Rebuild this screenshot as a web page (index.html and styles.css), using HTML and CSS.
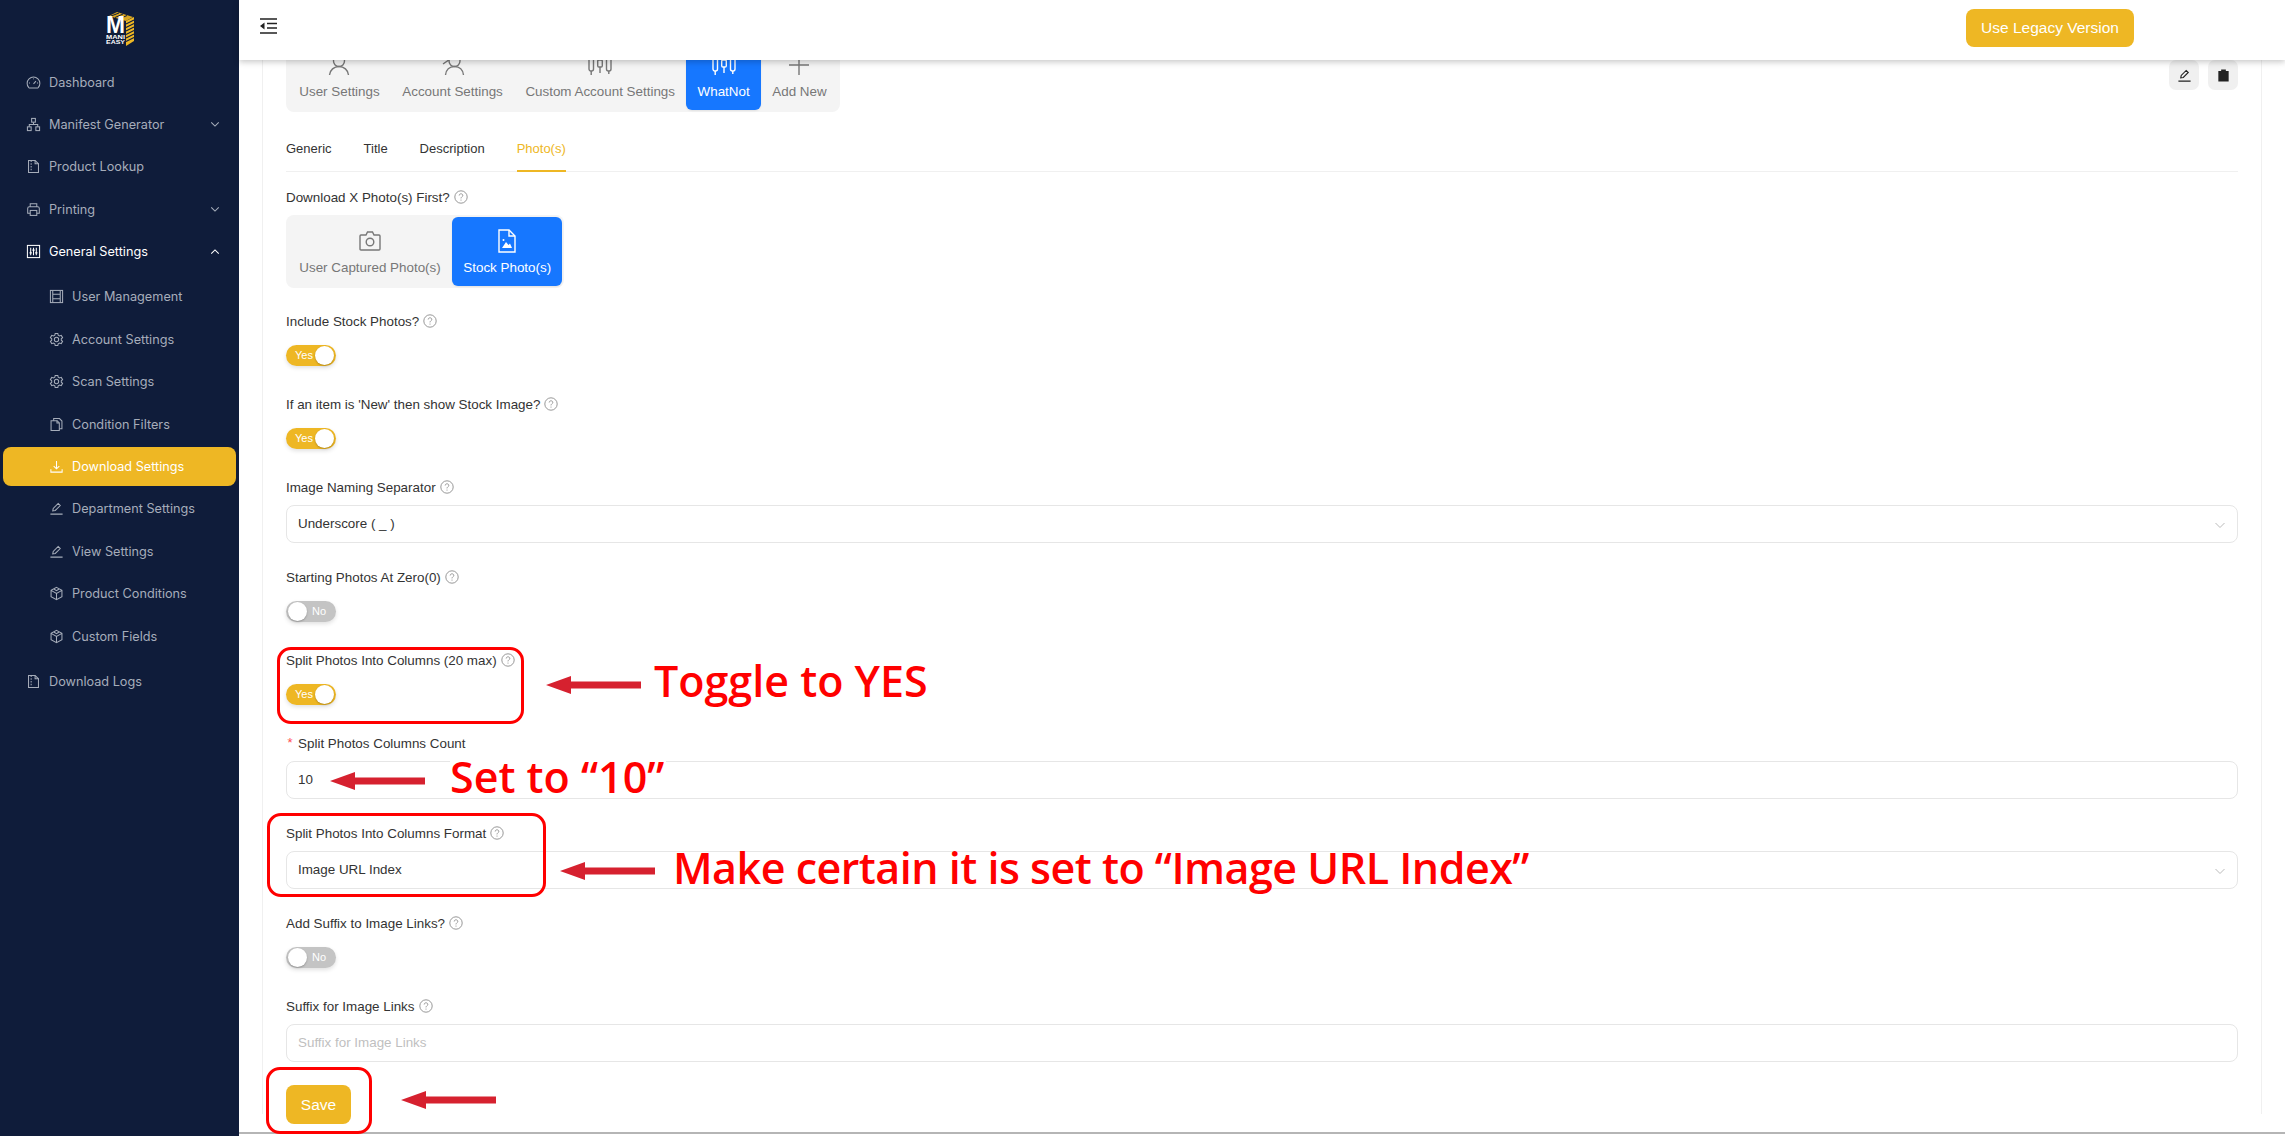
FILE: index.html
```html
<!DOCTYPE html>
<html lang="en">
<head>
    <meta charset="UTF-8">
    <title>Download Settings</title>
    <link rel="stylesheet" href="styles.css">
</head>
<body>

<svg class="sprite" xmlns="http://www.w3.org/2000/svg">
    <symbol id="i-gauge" viewBox="0 0 16 16"><path d="M3 13.500a6.800 6.800 0 1 1 10 0c-.3.3-.6.4-1 .4H4c-.4 0-.7-.1-1-.4z"/><path d="M8 9.500l2.600-3M3.200 8.500h1M11.800 8.500h1M8 3.600v1"/></symbol>
    <symbol id="i-tree" viewBox="0 0 16 16"><rect x="6" y="1.500" width="4" height="4"/><rect x="1.500" y="10.500" width="4" height="4"/><rect x="10.500" y="10.500" width="4" height="4"/><path d="M8 5.500V8M3.500 10.500V8h9v2.500"/></symbol>
    <symbol id="i-file" viewBox="0 0 16 16"><path d="M2.700 1.500h7l3.600 3.600v9.400H2.700z"/><path d="M9.700 1.500v3.600h3.600M5.500 1.500v1.600M5.500 4.500v1.600M5.500 7.500v1.600M5.500 10.500v1.600"/></symbol>
    <symbol id="i-print" viewBox="0 0 16 16"><path d="M4.500 5V1.800h7V5M4.500 12H1.800V6.800c0-1 .8-1.800 1.800-1.800h8.800c1 0 1.800.8 1.800 1.800V12h-2.700"/><rect x="4.500" y="9" width="7" height="5.300"/></symbol>
    <symbol id="i-box" viewBox="0 0 16 16"><rect x="1.500" y="1.500" width="13" height="13"/><path d="M4 1.500v13M12 1.500v13M4 5.500h8M4 10.500h8"/></symbol>
    <symbol id="i-gear" viewBox="0 0 16 16"><path d="M6.600 1.600h2.800l.4 1.800 1.500.8 1.800-.6 1.400 2.400-1.400 1.200v1.600l1.400 1.200-1.400 2.400-1.800-.6-1.500.8-.4 1.800H6.600l-.4-1.800-1.500-.8-1.800.6-1.400-2.400 1.400-1.200V7.200L1.500 6l1.400-2.400 1.800.6 1.500-.8z"/><circle cx="8" cy="8" r="2.300"/></symbol>
    <symbol id="i-copy" viewBox="0 0 16 16"><path d="M5 4V1.700h6.200l2.600 2.600v8.200H11"/><path d="M2.200 4h6.500L11 6.300v8.200H2.200z"/><path d="M8.500 4v2.500H11"/></symbol>
    <symbol id="i-down" viewBox="0 0 16 16"><path d="M8 2v8M5 7.500L8 10.400l3-2.900M2 11v3h12v-3"/></symbol>
    <symbol id="i-pen" viewBox="0 0 16 16"><path d="M4 10.500l.5-2.600 5.300-5.300 2.200 2.200-5.300 5.300zM1.500 14h13"/></symbol>
    <symbol id="i-cube" viewBox="0 0 16 16"><path d="M8 1.500l5.800 3.200v6.600L8 14.500l-5.800-3.200V4.700zM2.200 4.700L8 8l5.800-3.300M8 8v6.500M5.200 3.200L8 5l2.800-1.800"/></symbol>
    <symbol id="i-user" viewBox="0 0 24 24"><circle cx="12" cy="8" r="5.500"/><path d="M2.500 22c.5-5 4.500-8.500 9.500-8.500s9 3.500 9.500 8.500"/></symbol>
    <symbol id="i-users" viewBox="0 0 24 24"><circle cx="13.500" cy="8" r="5.500"/><path d="M4.500 22c.5-5 4-8.500 9-8.500s8.500 3.500 9 8.500M5 2l3.500 4.500L2 11"/></symbol>
    <symbol id="i-sliders" viewBox="0 0 24 24"><rect x="1" y="0" width="4.500" height="18" rx="2"/><rect x="18.500" y="0" width="4.500" height="18" rx="2"/><rect x="9.700" y="7" width="4.600" height="7" rx="1.200"/><path d="M3.200 18v4M12 0v7M12 14v6M20.800 18v3"/></symbol>
    <symbol id="i-help" viewBox="0 0 14 14"><circle cx="7" cy="7" r="6.200"/><path d="M5.200 5.500c0-1 .8-1.700 1.800-1.700s1.800.7 1.800 1.600c0 1.400-1.800 1.400-1.800 3M7 9.600v1"/></symbol>
    <symbol id="i-chev" viewBox="0 0 12 12"><path d="M1.500 4l4.500 4.500L10.500 4"/></symbol>
</svg>

<div class="app">

    <aside class="sidebar">
        <div class="logo">
            <svg width="30" height="35" viewBox="0 0 30 35">
                <path d="M4 4l8-4 16 5-7 4z" fill="#d8a520"/>
                <path d="M6 4l8-3M10 5.500l8-3.500M14 7l8-3.500" stroke="#0f1c3a" stroke-width="1"/>
                <path d="M21 9l8-4v24l-8 5z" fill="#eeb724"/>
                <path d="M21 12l8-4M21 15.500l8-4M21 19l8-4M21 22.500l8-4M21 26l8-4M21 29.500l8-4" stroke="#0f1c3a" stroke-width="1.100"/>
                <text x="1" y="21" class="logo-m" textLength="19" lengthAdjust="spacingAndGlyphs">M</text>
                <text x="1" y="26.500" class="logo-sm" textLength="19" lengthAdjust="spacingAndGlyphs">MANI</text>
                <text x="1" y="31.500" class="logo-sm" textLength="19" lengthAdjust="spacingAndGlyphs">EASY</text>
            </svg>
        </div>
        <nav class="menu">
            <a class="menu-item"><svg class="ico"><use href="#i-gauge"/></svg>Dashboard</a>
            <a class="menu-item"><svg class="ico"><use href="#i-tree"/></svg>Manifest Generator<svg class="chev"><use href="#i-chev"/></svg></a>
            <a class="menu-item"><svg class="ico"><use href="#i-file"/></svg>Product Lookup</a>
            <a class="menu-item"><svg class="ico"><use href="#i-print"/></svg>Printing<svg class="chev"><use href="#i-chev"/></svg></a>
            <a class="menu-item open">
                <svg class="ico" viewBox="0 0 16 16"><rect x="1.500" y="1.500" width="13" height="13"/><path d="M5 4v8M8 4v8M11 4v8"/><path d="M3.800 9.500h2.400M6.800 6.500h2.400M9.800 9.500h2.400" stroke-width="1.500"/></svg>
                General Settings<svg class="chev up"><use href="#i-chev"/></svg>
            </a>
            <div class="submenu">
                <a class="menu-item sub"><svg class="ico"><use href="#i-box"/></svg>User Management</a>
                <a class="menu-item sub"><svg class="ico"><use href="#i-gear"/></svg>Account Settings</a>
                <a class="menu-item sub"><svg class="ico"><use href="#i-gear"/></svg>Scan Settings</a>
                <a class="menu-item sub"><svg class="ico"><use href="#i-copy"/></svg>Condition Filters</a>
                <a class="menu-item sub active"><svg class="ico"><use href="#i-down"/></svg>Download Settings</a>
                <a class="menu-item sub"><svg class="ico"><use href="#i-pen"/></svg>Department Settings</a>
                <a class="menu-item sub"><svg class="ico"><use href="#i-pen"/></svg>View Settings</a>
                <a class="menu-item sub"><svg class="ico"><use href="#i-cube"/></svg>Product Conditions</a>
                <a class="menu-item sub"><svg class="ico"><use href="#i-cube"/></svg>Custom Fields</a>
            </div>
            <a class="menu-item logs"><svg class="ico"><use href="#i-file"/></svg>Download Logs</a>
        </nav>
    </aside>

    <div class="main">
        <header class="topbar">
            <svg class="fold" viewBox="0 0 17 16"><path d="M0 1h17M7 5.500h10M7 10h10M0 15h17"/><path class="fill" d="M4.500 4.500v7L0 8z"/></svg>
            <button class="legacy-btn">Use Legacy Version</button>
        </header>

        <div class="content">
            <div class="card">
                <div class="tab-row">
                    <div class="segmented">
                        <div class="seg-item"><svg class="seg-ico"><use href="#i-user"/></svg>User Settings</div>
                        <div class="seg-item"><svg class="seg-ico"><use href="#i-users"/></svg>Account Settings</div>
                        <div class="seg-item"><svg class="seg-ico"><use href="#i-sliders"/></svg>Custom Account Settings</div>
                        <div class="seg-item selected"><svg class="seg-ico"><use href="#i-sliders"/></svg>WhatNot</div>
                        <div class="seg-item"><svg class="seg-ico" viewBox="0 0 24 24"><path d="M12 2v20M2 12h20"/></svg>Add New</div>
                    </div>
                    <div class="row-actions">
                        <button class="icon-btn"><svg class="act-ico" viewBox="0 0 16 16"><path d="M4 10.500l.5-2.600 5.300-5.300 2.200 2.200-5.300 5.300zM1.500 14h13"/></svg></button>
                        <button class="icon-btn"><svg class="act-ico" viewBox="0 0 16 16"><path class="fill" d="M5.500 1.500h5v1.800h3v11.200h-11V3.300h3z"/></svg></button>
                    </div>
                </div>

                <div class="sub-tabs">
                    <span class="sub-tab">Generic</span>
                    <span class="sub-tab">Title</span>
                    <span class="sub-tab">Description</span>
                    <span class="sub-tab current">Photo(s)</span>
                </div>

                <div class="field seg-field">
                    <label>Download X Photo(s) First? <svg class="help"><use href="#i-help"/></svg></label>
                    <div class="segmented photos">
                        <div class="seg-item">
                            <svg class="seg-ico" viewBox="0 0 24 24"><path d="M3 6h5l1.500-3h5L16 6h5c.6 0 1 .4 1 1v13c0 .6-.4 1-1 1H3c-.6 0-1-.4-1-1V7c0-.6.4-1 1-1z"/><circle cx="12" cy="13" r="3.800"/></svg>
                            User Captured Photo(s)
                        </div>
                        <div class="seg-item selected">
                            <svg class="seg-ico" viewBox="0 0 24 24"><path d="M4 1h10l6 6v16H4z"/><path d="M14 1v6h6"/><path class="fill-w" d="M7 19l4-6 2.500 3 1.500-1.500 2 4.500z"/><circle class="fill-w" cx="8.500" cy="11" r="1"/></svg>
                            Stock Photo(s)
                        </div>
                    </div>
                </div>

                <div class="field">
                    <label>Include Stock Photos? <svg class="help"><use href="#i-help"/></svg></label>
                    <div class="switch-wrap"><span class="switch on"><span class="switch-text">Yes</span><span class="knob"></span></span></div>
                </div>

                <div class="field">
                    <label>If an item is 'New' then show Stock Image? <svg class="help"><use href="#i-help"/></svg></label>
                    <div class="switch-wrap"><span class="switch on"><span class="switch-text">Yes</span><span class="knob"></span></span></div>
                </div>

                <div class="field">
                    <label>Image Naming Separator <svg class="help"><use href="#i-help"/></svg></label>
                    <div class="select">Underscore ( _ )<svg class="select-arrow"><use href="#i-chev"/></svg></div>
                </div>

                <div class="field">
                    <label>Starting Photos At Zero(0) <svg class="help"><use href="#i-help"/></svg></label>
                    <div class="switch-wrap"><span class="switch"><span class="knob"></span><span class="switch-text">No</span></span></div>
                </div>

                <div class="field">
                    <label>Split Photos Into Columns (20 max) <svg class="help"><use href="#i-help"/></svg></label>
                    <div class="switch-wrap"><span class="switch on"><span class="switch-text">Yes</span><span class="knob"></span></span></div>
                </div>

                <div class="field">
                    <label><span class="required">*</span> Split Photos Columns Count</label>
                    <div class="select">10</div>
                </div>

                <div class="field">
                    <label>Split Photos Into Columns Format <svg class="help"><use href="#i-help"/></svg></label>
                    <div class="select">Image URL Index<svg class="select-arrow"><use href="#i-chev"/></svg></div>
                </div>

                <div class="field">
                    <label>Add Suffix to Image Links? <svg class="help"><use href="#i-help"/></svg></label>
                    <div class="switch-wrap"><span class="switch"><span class="knob"></span><span class="switch-text">No</span></span></div>
                </div>

                <div class="field">
                    <label>Suffix for Image Links <svg class="help"><use href="#i-help"/></svg></label>
                    <div class="select placeholder">Suffix for Image Links</div>
                </div>

                <button class="save-btn">Save</button>
            </div>
        </div>
    </div>

    <!-- red notes drawn on top of the screenshot -->
    <div class="note-box box-toggle"></div>
    <div class="note-box box-format"></div>
    <div class="note-box box-save"></div>

    <svg class="note-arrow arrow-toggle" viewBox="0 0 95 18"><path d="M0 9L25 0v5.500h70v7H25V18z"/></svg>
    <svg class="note-arrow arrow-count" viewBox="0 0 95 18"><path d="M0 9L25 0v5.500h70v7H25V18z"/></svg>
    <svg class="note-arrow arrow-format" viewBox="0 0 95 18"><path d="M0 9L25 0v5.500h70v7H25V18z"/></svg>
    <svg class="note-arrow arrow-save" viewBox="0 0 95 18"><path d="M0 9L25 0v5.500h70v7H25V18z"/></svg>

    <div class="note-text text-toggle">Toggle to YES</div>
    <div class="note-text text-count">Set to “10”</div>
    <div class="note-text text-format">Make certain it is set to “Image URL Index”</div>

</div>

</body>
</html>
```

FILE: styles.css
```css
* {
    box-sizing: border-box;
}
html, body {
    margin: 0;
    padding: 0;
    height: 100%;
    overflow: hidden;
}
body {
    font-family: "Liberation Sans", Arial, sans-serif;
    font-size: 13.400px;
    color: #333;
    background: #fff;
}
.sprite {
    display: none;
}
.app {
    position: relative;
    display: flex;
    width: 2285px;
    height: 1136px;
    overflow: hidden;
}

/* sidebar */
.sidebar {
    width: 239px;
    flex: none;
    background: #0f1c3a;
    color: #a6adba;
    font-family: Inter, "Liberation Sans", sans-serif;
    font-size: 12.700px;
}
.logo {
    height: 62.500px;
    padding-top: 12px;
    text-align: center;
}
.logo svg {
    display: block;
    margin: 0 auto;
}
.logo-m {
    font: bold 24px "Liberation Sans", sans-serif;
    fill: #fff;
}
.logo-sm {
    font: bold 5px "Liberation Sans", sans-serif;
    fill: #fff;
}
.menu {
    display: flex;
    flex-direction: column;
}
.menu-item {
    display: flex;
    align-items: center;
    height: 39px;
    margin: 0 3px 3.400px;
    padding-left: 23px;
    border-radius: 8px;
}
.menu-item .ico {
    width: 15px;
    height: 15px;
    margin-right: 8px;
    fill: none;
    stroke: currentColor;
    stroke-width: 1.100;
    flex: none;
}
.menu-item.open {
    color: #fff;
}
.menu-item .chev {
    width: 10px;
    height: 10px;
    margin-left: auto;
    margin-right: 16px;
    fill: none;
    stroke: currentColor;
    stroke-width: 1.300;
}
.chev.up {
    transform: rotate(180deg);
}
.submenu {
    display: flex;
    flex-direction: column;
    padding-top: 3px;
}
.menu-item.sub {
    padding-left: 46px;
}
.menu-item.active {
    background: #eeb724;
    color: #fff;
}
.menu-item.logs {
    margin-top: 3px;
}

/* top bar */
.main {
    flex: 1;
    min-width: 0;
    display: flex;
    flex-direction: column;
    border-bottom: 2px solid #b5b5b5;
    height: 1134px;
}
.topbar {
    position: relative;
    z-index: 2;
    flex: none;
    height: 60px;
    display: flex;
    align-items: center;
    justify-content: space-between;
    padding: 0 151px 0 21px;
    background: #fff;
    box-shadow: 0 2px 6px rgba(0, 0, 0, .22);
}
.fold {
    width: 17px;
    height: 16px;
    margin-top: -8px;
    fill: none;
    stroke: #222;
    stroke-width: 1.300;
}
.fold .fill {
    fill: #222;
    stroke: none;
}
.legacy-btn {
    width: 168px;
    height: 38px;
    margin-top: -4px;
    border: 0;
    border-radius: 8px;
    background: #eeb724;
    color: #fff;
    font: 15.500px "Liberation Sans", sans-serif;
}

/* card */
.content {
    flex: 1;
    min-height: 0;
    overflow: hidden;
    padding: 0 23px;
}
.card {
    height: 100%;
    padding: 0 23px;
    margin-top: -18px;
    border-left: 1px solid #f0f0f0;
    border-right: 1px solid #f0f0f0;
}
.tab-row {
    display: flex;
    justify-content: space-between;
    align-items: flex-start;
}
.segmented {
    display: inline-flex;
    padding: 2px;
    background: #f4f4f4;
    border-radius: 8px;
}
.seg-item {
    display: flex;
    flex-direction: column;
    align-items: center;
    height: 66px;
    padding: 9px 11.300px 0;
    color: #777;
    border-radius: 6px;
    line-height: 22px;
}
.seg-item.selected {
    background: #1677ff;
    color: #fff;
    box-shadow: 0 1px 2px rgba(0, 0, 0, .08);
}
.seg-ico {
    width: 24px;
    height: 24px;
    margin-bottom: 4px;
    fill: none;
    stroke: currentColor;
    stroke-width: 1.400;
}
.fill-w {
    fill: currentColor;
    stroke: none;
}
.row-actions {
    display: flex;
    gap: 9px;
    margin-top: 18px;
}
.icon-btn {
    width: 30px;
    height: 30px;
    padding: 0;
    border: 0;
    border-radius: 7px;
    background: #f0f0f0;
    display: flex;
    align-items: center;
    justify-content: center;
}
.act-ico {
    width: 15px;
    height: 15px;
    fill: none;
    stroke: #222;
    stroke-width: 1.200;
}
.act-ico .fill {
    fill: #222;
    stroke: none;
}
.sub-tabs {
    display: flex;
    gap: 32px;
    height: 46px;
    margin: 14px 0;
    border-bottom: 1px solid #f0f0f0;
    font-size: 13px;
}
.sub-tab {
    height: 46px;
    line-height: 46px;
    color: #333;
}
.sub-tab.current {
    color: #eeb724;
    border-bottom: 2px solid #eeb724;
}

/* form */
.field {
    margin-bottom: 23px;
}
.field label {
    display: flex;
    align-items: center;
    gap: 4px;
    height: 22px;
    margin-bottom: 7px;
    color: #333;
}
.help {
    width: 14px;
    height: 14px;
    fill: none;
    stroke: #8c8c8c;
    stroke-width: .9;
}
.required {
    color: #ff4d4f;
    font-family: "Liberation Mono", monospace;
}
.seg-field {
    margin-bottom: 22px;
}
.photos .seg-item {
    height: 69px;
    padding-top: 12px;
}
.switch-wrap {
    height: 32px;
    display: flex;
    align-items: center;
}
.field label + .switch-wrap {
    margin-top: 1px;
    margin-bottom: -1px;
}
.switch {
    display: flex;
    align-items: center;
    justify-content: space-between;
    width: 50px;
    height: 21px;
    padding: 0 1px 0 2px;
    border-radius: 11px;
    background: #c4c4c4;
    color: #fff;
    font-size: 11px;
    box-shadow: 0 2px 4px rgba(0, 0, 0, .12);
}
.switch.on {
    padding: 0 2px 0 9px;
    background: #eeb724;
}
.switch-text {
    margin-right: 9px;
}
.switch.on .switch-text {
    margin-right: 0;
}
.knob {
    width: 19px;
    height: 19px;
    border-radius: 50%;
    background: #fff;
    box-shadow: 0 1px 2px rgba(0, 0, 0, .25);
}
.select {
    position: relative;
    height: 38px;
    line-height: 36px;
    padding: 0 11px;
    border: 1px solid #e6e6e6;
    border-radius: 8px;
    background: #fff;
    color: #333;
}
.select.placeholder {
    color: #bfbfbf;
}
.select-arrow {
    position: absolute;
    right: 11px;
    top: 13px;
    width: 12px;
    height: 12px;
    fill: none;
    stroke: #bbb;
    stroke-width: 1;
}
.save-btn {
    display: block;
    width: 65px;
    height: 39px;
    border: 0;
    border-radius: 8px;
    background: #eeb724;
    color: #fff;
    font: 15.500px "Liberation Sans", sans-serif;
}

/* red notes, they sit on top of the page */
.note-box {
    position: absolute;
    border: 3px solid #f00;
    border-radius: 14px;
    z-index: 5;
}
.box-toggle {
    left: 277px;
    top: 647px;
    width: 247px;
    height: 77px;
}
.box-format {
    left: 267px;
    top: 813px;
    width: 279px;
    height: 84px;
}
.box-save {
    left: 266px;
    top: 1067px;
    width: 106px;
    height: 67px;
}
.note-arrow {
    position: absolute;
    width: 95px;
    height: 18px;
    fill: #d6212f;
    z-index: 5;
}
.arrow-toggle {
    left: 546px;
    top: 676px;
}
.arrow-count {
    left: 330px;
    top: 772px;
}
.arrow-format {
    left: 560px;
    top: 862px;
}
.arrow-save {
    left: 401px;
    top: 1091px;
}
.note-text {
    position: absolute;
    z-index: 5;
    font-family: "Open Sans", sans-serif;
    font-weight: 600;
    font-size: 43px;
    line-height: 46px;
    color: #f00;
    white-space: nowrap;
}
.text-toggle {
    left: 654px;
    top: 658px;
}
/* white patch hides the input's top border behind the note, as in the reference */
.text-count {
    left: 450px;
    top: 761px;
    height: 36px;
    line-height: 32px;
    padding-right: 2px;
    background: #fff;
}
.text-format {
    left: 673px;
    top: 845px;
    letter-spacing: -.5px;
}
```
